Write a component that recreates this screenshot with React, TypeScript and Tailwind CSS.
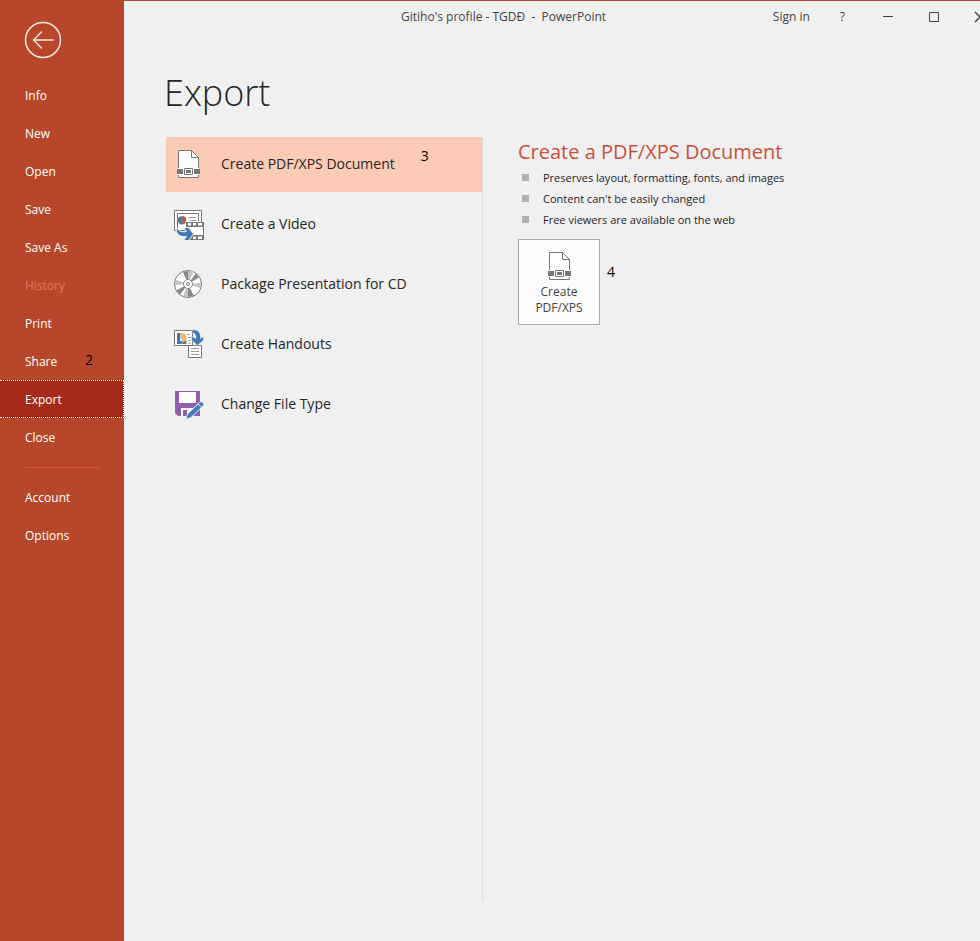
import React, { useState } from 'react';

const PdfIcon = () => (
    <svg width="32" height="32" viewBox="0 0 32 32" fill="none" aria-hidden="true">
        <path d="M6.5 19V2.5H20L26.5 9V19Z" fill="#fff" />
        <path d="M6 19h21v11H6z" fill="#fff" />
        <path d="M6.5 20V2.5H19.5L26.5 9.5V20M19.5 2.5V9.5H26.5M6.5 27v2.5H26.5V27" stroke="#777" />
        <path d="M5 21h6v5H5zM22 21h6v5h-6z" fill="#777" />
        <path d="M12.5 20.5h8v6h-8z" stroke="#777" />
        <path d="M14 22h5v3h-5z" fill="#777" />
    </svg>
);

const VideoIcon = () => (
    <svg width="32" height="32" viewBox="0 0 32 32" fill="none" aria-hidden="true">
        <path d="M2.5 2.5h27v20h-27z" fill="#fff" stroke="#777" />
        <path d="M5.5 20V5.5h21V13" stroke="#777" />
        <circle cx="10" cy="12.500" r="4" fill="#777" />
        <path d="M10.500 12.500v-4.500a4.500 4.500 0 0 1 4 4.500Z" fill="#d35230" />
        <path d="M6 12.500a4 4 0 0 1 4-4v4z" fill="#3e78b5" />
        <path d="M16 9.500h8M18 12.500h6" stroke="#999" />
        <path d="M14 14h18v18H14z" fill="#777" />
        <path d="M15 19h16v8H15z" fill="#fff" />
        <path d="M16 15h3v2.500h-3zM21 15h3v2.500h-3zM26 15h4v2.500h-4zM21 28.500h3V31h-3zM26 28.500h4V31h-4z" fill="#fff" />
        <path d="M4 19.500L7 22.500C9 24 12 24 14.500 23.500L11.500 19.500H16.500L21.500 26L16.500 32.500H11.500L14.500 28.500C8 29 4 27 4 19.500Z" fill="#3e78b5" stroke="#f0f0f0" />
    </svg>
);

const DiscIcon = () => (
    <svg width="32" height="32" viewBox="0 0 32 32" fill="none" aria-hidden="true">
        <circle cx="16" cy="16" r="13.500" fill="#fff" stroke="#777" />
        <path d="M16 16L11 4l5-1ZM16 16L16 29l6-1ZM16 16L24 5.500l3 4ZM16 16L8 26.500l-3.500-4Z" fill="#888" />
        <path d="M16 16L16 3h5.500ZM16 16L4 12l-1 5ZM16 16l13-1-1 5ZM16 16l-5 12 5 1Z" fill="#c4c4c4" />
        <circle cx="16" cy="16" r="4.500" fill="#fff" stroke="#888" />
        <circle cx="16" cy="16" r="1.500" fill="#fff" stroke="#777" />
    </svg>
);

const HandoutsIcon = () => (
    <svg width="32" height="32" viewBox="0 0 32 32" fill="none" aria-hidden="true">
        <path d="M2.500 2.500h18v15h-18z" fill="#fff" stroke="#777" />
        <path d="M5 5h3v8h3l-2 3H5z" fill="#3e78b5" />
        <path d="M8 5h2c3 0 4.500 2 4.500 5v3H11L8 10z" fill="#efb77a" />
        <path d="M9 16l3-3h2.500v3z" fill="#777" />
        <path d="M15 6.500h3M16 9.500h3M16 12.500h3M16 15h3" stroke="#999" />
        <path d="M16.500 17.500h13v12h-13z" fill="#fff" stroke="#777" />
        <path d="M19 20.500h8M19 23.500h8M19 26.500h8" stroke="#999" />
        <path d="M20 2C26 1 29 5 28.500 10.500L31.500 8.500V12L25.500 17.500L19.500 12V8.500L24 10.500C24.500 7 23 5 20 5Z" fill="#3e78b5" stroke="#f0f0f0" strokeWidth="0.500" />
    </svg>
);

const FileTypeIcon = () => (
    <svg width="32" height="32" viewBox="0 0 32 32" fill="none" aria-hidden="true">
        <path d="M3 3h25v25H6l-3-3z" fill="#8f5fb0" />
        <path d="M7 4h17v11H7z" fill="#fff" />
        <path d="M9 20h13v8H9z" fill="#fff" />
        <path d="M11 22h4v6h-4z" fill="#8f5fb0" />
        <path d="M13.500 31.500L15.500 26L27.500 14.500C28.500 13.500 30 13.500 31 14.500C32 15.500 32 17 31 18L19 29.500Z" fill="#3e7fb5" stroke="#f0f0f0" />
        <path d="M26 16l3.500 3.500" stroke="#f0f0f0" />
    </svg>
);

const menuItems = ['Info', 'New', 'Open', 'Save', 'Save As', 'History', 'Print', 'Share', 'Export', 'Close'];

const exportOptions = [
    { label: 'Create PDF/XPS Document', icon: PdfIcon, step: '3' },
    { label: 'Create a Video', icon: VideoIcon },
    { label: 'Package Presentation for CD', icon: DiscIcon },
    { label: 'Create Handouts', icon: HandoutsIcon },
    { label: 'Change File Type', icon: FileTypeIcon },
];

const benefits = [
    'Preserves layout, formatting, fonts, and images',
    "Content can't be easily changed",
    'Free viewers are available on the web',
];

const Sidebar = () => {
    const [active, setActive] = useState('Export');

    const itemClass = (name: string) => {
        if (name === active) {
            return 'border-dotted border-white bg-[#a52a1a] text-white';
        }
        return name === 'History' ? 'border-transparent text-[#e2765a]' : 'border-transparent text-white';
    };

    return (
        <nav className="flex w-[124px] shrink-0 flex-col bg-[#b7472a] text-xs">
            <button type="button" aria-label="Back" className="mt-5 mb-[17px] ml-6 self-start">
                <svg width="38" height="38" viewBox="0 0 38 38" fill="none" stroke="#fde6dc" strokeWidth="1.500">
                    <circle cx="19" cy="19" r="17.500" />
                    <path d="M29.500 19H9.500M18 10.500L9.500 19l8.500 8.500" />
                </svg>
            </button>
            {menuItems.map((name) => (
                <button
                    key={name}
                    type="button"
                    disabled={name === 'History'}
                    onClick={() => setActive(name)}
                    className={`flex h-[38px] items-center justify-between border border-l-0 pt-0.5 pr-[30px] pl-[25px] text-left ${itemClass(name)}`}
                >
                    {name}
                    {name === 'Share' && <span className="pb-1 text-sm text-black">2</span>}
                </button>
            ))}
            <hr className="mx-[25px] mt-[11px] mb-2.5 border-[#d9593a]" />
            {['Account', 'Options'].map((name) => (
                <button
                    key={name}
                    type="button"
                    onClick={() => setActive(name)}
                    className={`flex h-[38px] items-center border border-l-0 pt-0.5 pl-[25px] text-left ${itemClass(name)}`}
                >
                    {name}
                </button>
            ))}
        </nav>
    );
};

const TitleBar = () => (
    <header className="flex h-8 items-center justify-end overflow-hidden text-xs text-[#444]">
        <p className="mr-auto pl-[277px] whitespace-pre">Gitiho's profile - TGDĐ  -  PowerPoint</p>
        <button type="button" className="mr-[30px]">Sign in</button>
        <button type="button" className="mr-[37px]" aria-label="Help">?</button>
        <button type="button" className="mr-[34px]" aria-label="Minimize">
            <svg width="12" height="12" viewBox="0 0 12 12" stroke="#444">
                <path d="M1 5.500h10" />
            </svg>
        </button>
        <button type="button" className="mr-[34px]" aria-label="Maximize">
            <svg width="12" height="12" viewBox="0 0 12 12" fill="none" stroke="#444">
                <path d="M1.500 1.500h9v9h-9z" />
            </svg>
        </button>
        <button type="button" className="-mr-1.5" aria-label="Close">
            <svg width="12" height="12" viewBox="0 0 12 12" stroke="#444" strokeWidth="1.500">
                <path d="M1 1l10 10M11 1L1 11" />
            </svg>
        </button>
    </header>
);

const App = () => {
    const [selected, setSelected] = useState(0);

    return (
        <div className="flex min-h-screen border-t border-[#b7472a] bg-[#f0f0f0] font-['Open_Sans','Noto_Sans',sans-serif] text-[#262626]">
            <Sidebar />
            <div className="flex min-w-0 flex-1 flex-col">
                <TitleBar />
                <main className="flex flex-1 flex-col pt-8 pb-10 pl-10">
                    <h1 className="mb-4 text-4xl leading-14 font-light">Export</h1>
                    <div className="flex flex-1 pl-0.5">
                        <div className="flex w-[317px] shrink-0 flex-col gap-[5px] border-r border-[#dcdcdc]">
                            {exportOptions.map(({ label, icon: Icon, step }, index) => (
                                <button
                                    key={label}
                                    type="button"
                                    onClick={() => setSelected(index)}
                                    className={`flex h-[55px] items-center pb-0.5 pl-1.5 text-left text-sm ${index === selected ? 'bg-[#fccbb5]' : ''}`}
                                >
                                    <Icon />
                                    <span className="ml-[17px]">{label}</span>
                                    {step && <span className="ml-[26px] pb-4 text-black">{step}</span>}
                                </button>
                            ))}
                        </div>
                        <section className="pl-[35px]">
                            <h2 className="text-xl leading-[30px] text-[#cb5037]">Create a PDF/XPS Document</h2>
                            <ul className="text-[11px] leading-[21px]">
                                {benefits.map((text) => (
                                    <li key={text} className="flex items-center">
                                        <span className="mr-3.5 ml-1 size-[7px] bg-[#b1b1b1]" />
                                        {text}
                                    </li>
                                ))}
                            </ul>
                            <div className="mt-[9px] flex items-center">
                                <button
                                    type="button"
                                    className="flex h-[86px] w-[82px] flex-col items-center border border-[#ababab] bg-[#fdfdfd] pt-2.5 text-xs leading-4 text-[#444]"
                                >
                                    <PdfIcon />
                                    <span className="mt-0.5">Create</span>
                                    <span>PDF/XPS</span>
                                </button>
                                <span className="mb-5 ml-[7px] text-sm text-black">4</span>
                            </div>
                        </section>
                    </div>
                </main>
            </div>
        </div>
    );
};

export default App;
